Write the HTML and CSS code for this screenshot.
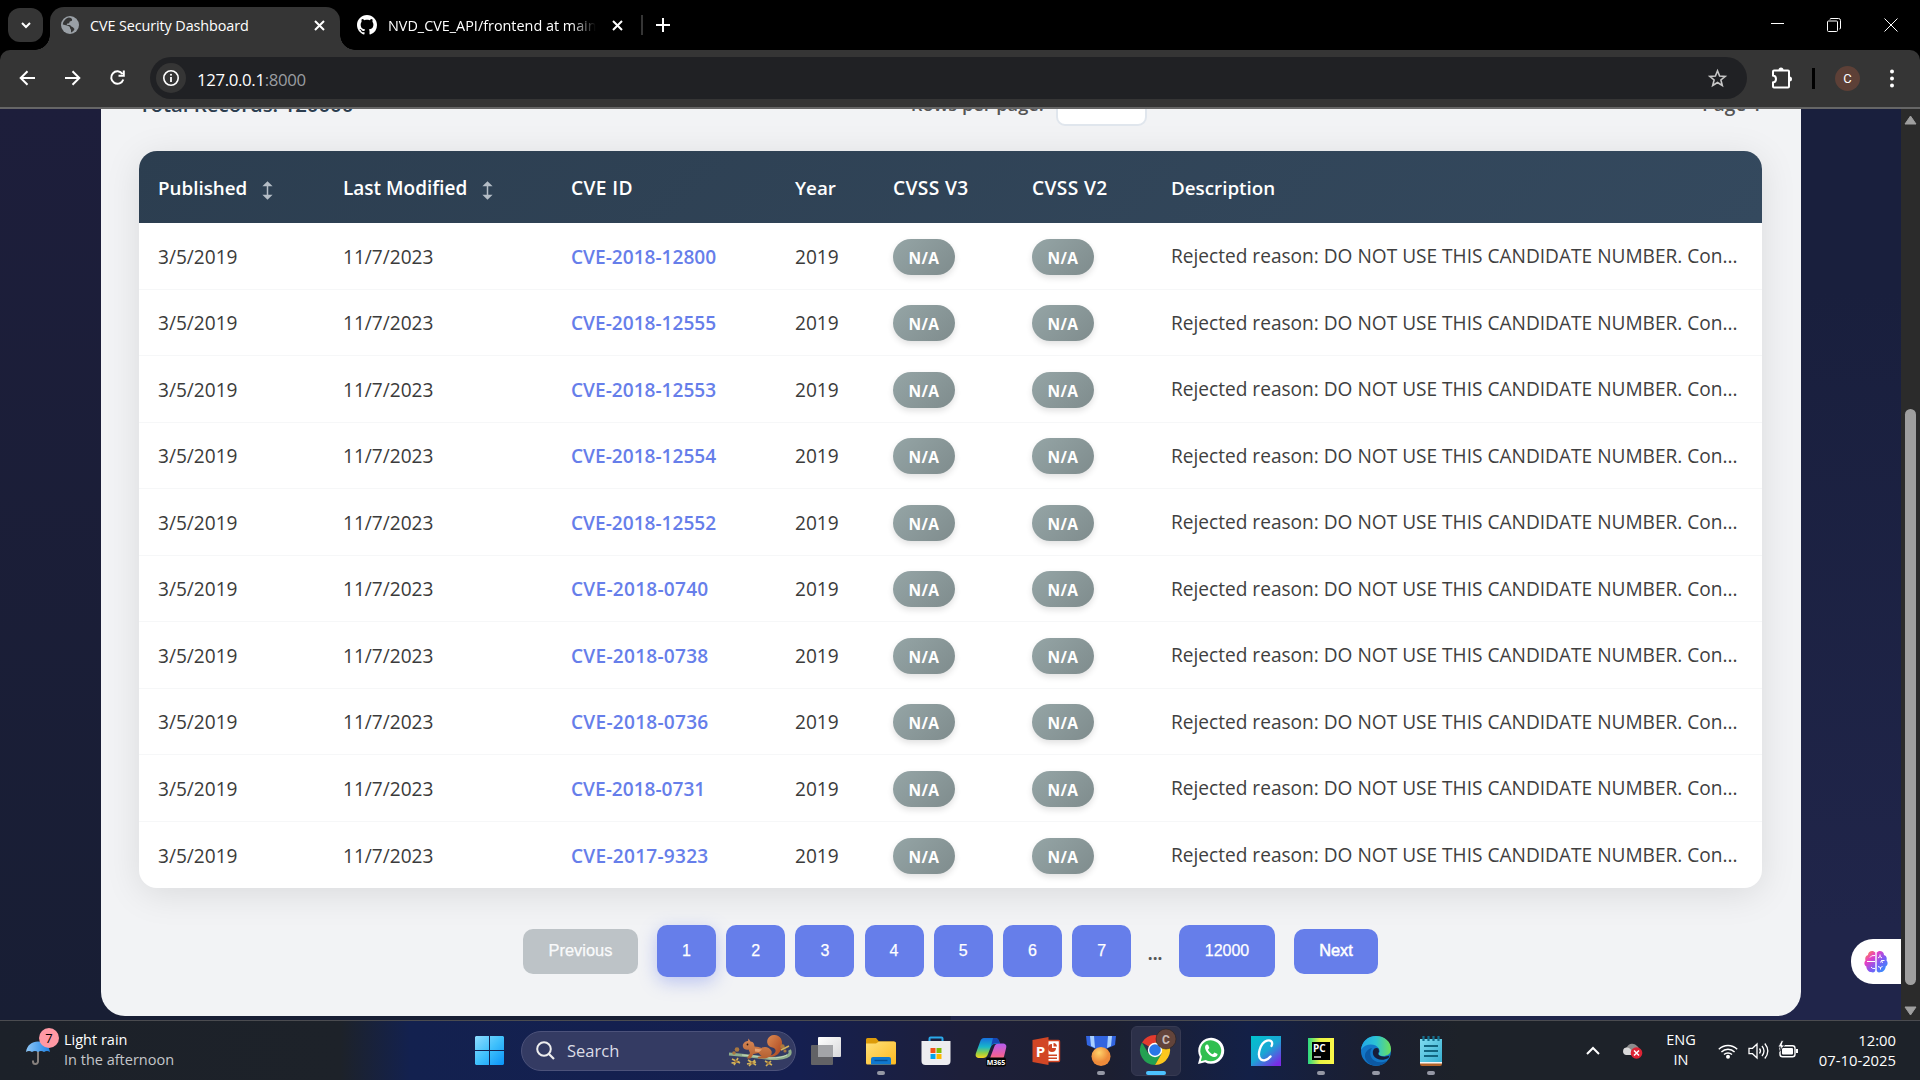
FILE: index.html
```html
<!DOCTYPE html>
<html lang="en">
<head>
<meta charset="utf-8">
<title>CVE Security Dashboard</title>
<link rel="stylesheet" href="styles.css">
</head>
<body>
<div class="screen">
  <header class="tabstrip">
    <div class="tab-search"><svg width="12" height="12" viewBox="0 0 12 12"><path d="M2 4l4 4 4-4" class="ln2"/></svg></div>
    <div class="tab active">
      <svg class="fav" width="18" height="18" viewBox="0 0 18 18"><circle cx="9" cy="9" r="9" fill="#9aa0a6"/><path d="M8 1.5C5 2 2 5 1.8 8.500L6 9.500c2 .5 3 1 3 2.500 0 1 1 1 1 2v2.500c2-.8 3-2 3.500-3.500-1-1-1.500-2-3-2.500-1-.3-.5-1.500-2-1.500H6.500c-1 0-1-1.500 0-1.500s2-.5 2-1.500 2-.5 2.500-1.500-.5-2-1-2.500z" fill="#353535"/></svg>
      <span class="tab-title t1">CVE Security Dashboard</span>
      <svg class="close" width="11" height="11" viewBox="0 0 11 11"><path d="M1 1l9 9M10 1l-9 9" class="ln2"/></svg>
    </div>
    <div class="tab">
      <svg class="fav" width="20" height="20" viewBox="0 0 16 16"><path fill="#fff" d="M8 0C3.580 0 0 3.580 0 8c0 3.540 2.290 6.530 5.470 7.590.4.070.55-.17.55-.38 0-.19-.01-.82-.01-1.490-2.010.37-2.530-.49-2.690-.94-.09-.23-.48-.94-.82-1.130-.28-.15-.68-.52-.01-.53.63-.01 1.080.58 1.230.82.72 1.210 1.870.87 2.330.66.070-.52.28-.87.51-1.070-1.780-.2-3.640-.89-3.640-3.950 0-.87.31-1.590.82-2.150-.08-.2-.36-1.020.08-2.120 0 0 .67-.21 2.200.82.640-.18 1.320-.27 2-.27s1.360.09 2 .27c1.530-1.040 2.200-.82 2.200-.82.44 1.100.16 1.920.08 2.120.51.56.82 1.270.82 2.150 0 3.070-1.870 3.750-3.650 3.950.29.25.54.73.54 1.480 0 1.070-.01 1.930-.01 2.200 0 .21.15.46.55.38A8.010 8.010 0 0 0 16 8c0-4.420-3.580-8-8-8z"/></svg>
      <span class="tab-title t2">NVD_CVE_API/frontend at main</span>
      <svg class="close" width="11" height="11" viewBox="0 0 11 11"><path d="M1 1l9 9M10 1l-9 9" class="ln2"/></svg>
    </div>
    <i class="tab-sep"></i>
    <svg class="plus" width="14" height="14" viewBox="0 0 14 14"><path d="M7 0v14M0 7h14" class="ln2"/></svg>
    <div class="win">
      <svg width="14" height="14" viewBox="0 0 14 14"><path d="M1 5.500h13" class="ln1"/></svg>
      <svg width="14" height="14" viewBox="0 0 14 14"><rect x=".5" y="3" width="10" height="10.500" rx="1" class="ln1"/><path d="M3 1.500Q3 .5 4 .5h7.500q2 0 2 2V10q0 1-1 1" class="ln1"/></svg>
      <svg width="14" height="14" viewBox="0 0 14 14"><path d="M.5.500l13 13M13.500.500l-13 13" class="ln1"/></svg>
    </div>
  </header>
  <div class="toolbar">
    <svg class="nav" width="16" height="16" viewBox="0 0 16 16"><path d="M15 8H1M7.500 1.200L.7 8l6.800 6.800" class="ln2"/></svg>
    <svg class="nav" width="16" height="16" viewBox="0 0 16 16"><path d="M0 8h14M7.500 1.200L14.300 8l-6.800 6.800" class="ln2"/></svg>
    <svg class="nav" width="16" height="16" viewBox="0 0 16 16"><path d="M12.500 4A6.200 6.200 0 1 0 13.300 9.500M13.800.5v5.300H8.500" class="ln2"/></svg>
    <div class="omnibox">
      <span class="info"><svg width="16" height="16" viewBox="0 0 16 16"><circle cx="8" cy="8" r="7.200" fill="none" stroke="#fff" stroke-width="1.600"/><path d="M8 7v5" stroke="#fff" stroke-width="1.800"/><circle cx="8" cy="4.700" r="1" fill="#fff"/></svg></span>
      <span class="url">127.0.0.1<span>:8000</span></span>
      <svg class="star" width="19" height="19" viewBox="0 0 19 19"><path d="M9.500 1.800l2.100 5.200 5.600.4-4.300 3.600 1.400 5.500-4.800-3-4.800 3 1.400-5.500L1.800 7.400l5.600-.4z" fill="none" stroke="#c7c7c7" stroke-width="1.600"/></svg>
    </div>
    <svg class="ext" width="22" height="22" viewBox="0 0 22 22"><path d="M2 4.500q0-1 1-1h14q1 0 1 1V19.500q0 1-1 1H3q-1 0-1-1V15.500c4-.5 4-6.500 0-7z" fill="none" stroke="#fff" stroke-width="2"/><path d="M7.500 3a2.500 2.500 0 0 1 5 0zM18.500 9.500a2.500 2.500 0 0 1 0 5z" fill="#fff"/></svg>
    <i class="tb-sep"></i>
    <span class="avatar">C</span>
    <svg class="dots" width="4" height="19" viewBox="0 0 4 19"><circle cx="2" cy="2.500" r="2" fill="#fff"/><circle cx="2" cy="9.500" r="2" fill="#fff"/><circle cx="2" cy="16.500" r="2" fill="#fff"/></svg>
  </div>

  <div class="viewport">
    <main class="page">
      <section class="card">
        <div class="controls">
          <span class="total">Total Records: 120000</span>
          <label class="per-page"><span>Rows per page:</span><span class="select"></span></label>
          <span class="page-no">Page 1</span>
        </div>
        <div class="table-wrap">
        <table>
          <colgroup><col class="c1"><col class="c2"><col class="c3"><col class="c4"><col class="c5"><col class="c5"><col></colgroup>
          <thead><tr>
            <th>Published<svg class="sort" width="9" height="19" viewBox="0 0 9 19"><path d="M4.500 1v17M1.200 4.500L4.500 1.200 7.800 4.500zM1.200 14.500L4.500 17.800 7.800 14.500z"/></svg></th>
            <th class="mod">Last Modified<svg class="sort" width="9" height="19" viewBox="0 0 9 19"><path d="M4.500 1v17M1.200 4.500L4.500 1.200 7.800 4.500zM1.200 14.500L4.500 17.800 7.800 14.500z"/></svg></th>
            <th class="caps">CVE ID</th><th>Year</th><th class="caps">CVSS V3</th><th class="caps">CVSS V2</th><th>Description</th>
          </tr></thead>
          <tbody>
            <tr><td>3/5/2019</td><td>11/7/2023</td><td class="id">CVE-2018-12800</td><td>2019</td><td><span class="badge">N/A</span></td><td><span class="badge">N/A</span></td><td class="desc">Rejected reason: DO NOT USE THIS CANDIDATE NUMBER. Con...</td></tr>
            <tr><td>3/5/2019</td><td>11/7/2023</td><td class="id">CVE-2018-12555</td><td>2019</td><td><span class="badge">N/A</span></td><td><span class="badge">N/A</span></td><td class="desc">Rejected reason: DO NOT USE THIS CANDIDATE NUMBER. Con...</td></tr>
            <tr><td>3/5/2019</td><td>11/7/2023</td><td class="id">CVE-2018-12553</td><td>2019</td><td><span class="badge">N/A</span></td><td><span class="badge">N/A</span></td><td class="desc">Rejected reason: DO NOT USE THIS CANDIDATE NUMBER. Con...</td></tr>
            <tr><td>3/5/2019</td><td>11/7/2023</td><td class="id">CVE-2018-12554</td><td>2019</td><td><span class="badge">N/A</span></td><td><span class="badge">N/A</span></td><td class="desc">Rejected reason: DO NOT USE THIS CANDIDATE NUMBER. Con...</td></tr>
            <tr><td>3/5/2019</td><td>11/7/2023</td><td class="id">CVE-2018-12552</td><td>2019</td><td><span class="badge">N/A</span></td><td><span class="badge">N/A</span></td><td class="desc">Rejected reason: DO NOT USE THIS CANDIDATE NUMBER. Con...</td></tr>
            <tr><td>3/5/2019</td><td>11/7/2023</td><td class="id short">CVE-2018-0740</td><td>2019</td><td><span class="badge">N/A</span></td><td><span class="badge">N/A</span></td><td class="desc">Rejected reason: DO NOT USE THIS CANDIDATE NUMBER. Con...</td></tr>
            <tr><td>3/5/2019</td><td>11/7/2023</td><td class="id short">CVE-2018-0738</td><td>2019</td><td><span class="badge">N/A</span></td><td><span class="badge">N/A</span></td><td class="desc">Rejected reason: DO NOT USE THIS CANDIDATE NUMBER. Con...</td></tr>
            <tr><td>3/5/2019</td><td>11/7/2023</td><td class="id short">CVE-2018-0736</td><td>2019</td><td><span class="badge">N/A</span></td><td><span class="badge">N/A</span></td><td class="desc">Rejected reason: DO NOT USE THIS CANDIDATE NUMBER. Con...</td></tr>
            <tr><td>3/5/2019</td><td>11/7/2023</td><td class="id">CVE-2018-0731</td><td>2019</td><td><span class="badge">N/A</span></td><td><span class="badge">N/A</span></td><td class="desc">Rejected reason: DO NOT USE THIS CANDIDATE NUMBER. Con...</td></tr>
            <tr><td>3/5/2019</td><td>11/7/2023</td><td class="id short">CVE-2017-9323</td><td>2019</td><td><span class="badge">N/A</span></td><td><span class="badge">N/A</span></td><td class="desc">Rejected reason: DO NOT USE THIS CANDIDATE NUMBER. Con...</td></tr>
          </tbody>
        </table>
        </div>
        <nav class="pager">
          <button class="prev" disabled>Previous</button>
          <div class="pages">
            <button class="current">1</button><button>2</button><button>3</button><button>4</button><button>5</button><button>6</button><button>7</button>
            <span class="gap">...</span>
            <button class="last">12000</button>
          </div>
          <button class="next">Next</button>
        </nav>
      </section>
      <div class="brain"><svg width="24" height="24" viewBox="0 0 24 24"><defs><linearGradient id="br" x1="0" y1="0" x2="1" y2="1"><stop offset="0" stop-color="#ff9d2e"/><stop offset=".3" stop-color="#e83fc4"/><stop offset=".6" stop-color="#7b5cf5"/><stop offset="1" stop-color="#1fa0ff"/></linearGradient></defs><path d="M11.300 2.500C9-.5 4 1 4 5 1 6 1 9 1.500 10.500c-2 2-1 5 .8 6C2.500 20 5 22 7 22c2.500 1 4.300 0 4.300-2zM12.700 2.500C15-.5 20 1 20 5c3 1 3 4 2.500 5.500 2 2 1 5-.8 6C21.500 20 19 22 17 22c-2.500 1-4.300 0-4.300-2z" fill="url(#br)"/><path d="M3 11.500h8M6 7.500Q7 5 11 5.500M7 17q1 2 4 1.500M14 8l2-1.500v-2M16 6.500l2 1.500M20.500 10.500h-3l-1 2M17.500 10.500l1 2.500M14 16.500l2.500 1 2-1M16.500 17.500v2" fill="none" stroke="#fff" stroke-width="1"/></svg></div>
    </main>
    <div class="scrollbar">
      <svg width="13" height="10" viewBox="0 0 13 10"><path d="M6.500 1L12 9H1z" fill="#9f9f9f" stroke="#9f9f9f" stroke-linejoin="round"/></svg>
      <i class="thumb"></i>
      <svg width="13" height="10" viewBox="0 0 13 10"><path d="M6.500 9L12 1H1z" fill="#9f9f9f" stroke="#9f9f9f" stroke-linejoin="round"/></svg>
    </div>
  </div>

  <footer class="taskbar">
    <div class="weather">
      <div class="umb"><svg width="26" height="26" viewBox="0 0 26 26"><defs><linearGradient id="um"><stop offset="0" stop-color="#8fc7f7"/><stop offset="1" stop-color="#1d83e6"/></linearGradient></defs><path d="M13 10v12.500a2.500 2.500 0 0 1-5 0v-1" fill="none" stroke="#86807d" stroke-width="2"/><path d="M1 13C2 6 7 2.500 13 2.500S24 6 25 13q-3-2-6 0-3-2-6 0-3-2-6 0-3-2-6 0z" fill="url(#um)"/></svg><b>7</b></div>
      <div class="wtext"><span>Light rain</span><span class="dim">In the afternoon</span></div>
    </div>
    <div class="apps">
      <svg class="start" width="29" height="29" viewBox="0 0 29 29"><defs><linearGradient id="wn" x1="0" y1="0" x2="1" y2="1" ><stop offset="0" stop-color="#8fdcff"/><stop offset=".5" stop-color="#3fc0fb"/><stop offset="1" stop-color="#0a93f8"/></linearGradient></defs><path d="M1 0h13v14H0V1zM15 0h13l1 1v13H15zM0 15h14v14H1l-1-1zM15 15h14v13l-1 1H15z" fill="url(#wn)"/></svg>
      <div class="search">
        <svg width="19" height="19" viewBox="0 0 19 19"><circle cx="8" cy="8" r="6.800" fill="none" stroke="#eee" stroke-width="2"/><path d="M13 13l5 5" stroke="#eee" stroke-width="2.200"/></svg>
        <span>Search</span>
        <svg class="squirrel" width="64" height="34" viewBox="0 0 64 34"><defs><linearGradient id="tail" x1="0" y1="0" x2="1" y2="1"><stop offset="0" stop-color="#dd8b52"/><stop offset="1" stop-color="#a8421d"/></linearGradient><linearGradient id="fur" x1="0" y1="0" x2="0" y2="1"><stop offset="0" stop-color="#d98a58"/><stop offset="1" stop-color="#b35f30"/></linearGradient></defs>
          <path d="M1 20Q24 22 42 24.500q15 0 19-3.500 2-2 .5-5" fill="none" stroke="#8fae8b" stroke-width="3"/><path d="M14 21q14 1 28 3 12 0 17-3" fill="none" stroke="#c5d6bd" stroke-width="1"/>
          <path d="M40 22c6-1 9-4 7-7-1-2-4-1-6-3-4-4-1-11 5-11 6-.3 9 5 8 11-1 7-6 11-12 11z" fill="url(#tail)"/>
          <path d="M15 13c-1-3 2-6 5-6l.5-2.500 2 3c3 0 4 3 4 5 3 0 5 1 7 1.500 3-2 8-1 10 3 1 4-2 7-7 7.500h-6l-1-1.500 4-1-3-3-5 1-3 4.500h-3.500l3-5.500-1.500-3.500c-2 .5-5 0-5.500-2.500z" fill="url(#fur)"/><path d="M27 14.500l7 1-3 2.500-4-.5z" fill="#e6a272"/><circle cx="19.500" cy="10.500" r=".9" fill="#2a1a12"/>
          <g fill="#a97740"><circle cx="9" cy="15.500" r="2.300"/><circle cx="6" cy="19" r="1.800"/><circle cx="54.500" cy="12.500" r="2.200"/><circle cx="57" cy="17" r="1.600"/></g><g stroke="#d2b25b" stroke-width="1.600"><path d="M4 25l8 4M10 24l-4 7M3.500 29l8-1.500M20 26l8 5M27 26l-6 6M19 30l9-2M37 27l7 4M43 27l-5 5M53 16l8-4"/></g><g fill="#9a7138"><circle cx="8" cy="27.500" r="1.500"/><circle cx="24" cy="29" r="1.500"/><circle cx="40" cy="29" r="1.500"/></g></svg>
      </div>
      <div class="app"><svg width="30" height="30" viewBox="0 0 30 30"><defs><linearGradient id="tv" x1="0" y1="0" x2="1" y2="1"><stop offset="0" stop-color="#fff"/><stop offset="1" stop-color="#d8d8da"/></linearGradient></defs><rect y="9" width="22" height="20" rx="1" fill="#626266"/><rect x="7" y="1" width="23" height="20" rx="1" fill="url(#tv)"/><path d="M7 9h15v12H7z" fill="#a3a4a8"/></svg></div>
      <div class="app run"><svg width="30" height="30" viewBox="0 0 30 30"><defs><linearGradient id="fo" x1="0" y1="0" x2="1" y2="1"><stop offset="0" stop-color="#ffe07a"/><stop offset="1" stop-color="#fdba20"/></linearGradient></defs><path d="M0 10V3.500Q0 2 1.500 2H10l3 3.500h15V12z" fill="#dd9b0a"/><path d="M0 7.500h10l3-2h15.500Q30 5.500 30 7V27q0 1.500-1.500 1.500h-27Q0 28.500 0 27z" fill="url(#fo)"/><path d="M5 28.500V23q0-2 2-2h16q2 0 2 2v5.500z" fill="#0f78cf"/><path d="M8.500 24.500h13" stroke="#064f94" stroke-width="1.400"/></svg></div>
      <div class="app"><svg width="30" height="30" viewBox="0 0 30 30"><path d="M8.500 7V2.500Q8.500 1.500 9.500 1.500h11q1 0 1 1V7" fill="none" stroke="#2aa9ea" stroke-width="2"/><path d="M.5 5h29v20q0 4-4 4h-21q-4 0-4-4z" fill="#ededf0"/><path d="M9.500 12h5v5h-5z" fill="#f1511b"/><path d="M15.500 12h5v5h-5z" fill="#80bc06"/><path d="M9.500 18h5v5h-5z" fill="#00a4ef"/><path d="M15.500 18h5v5h-5z" fill="#fbb800"/></svg></div>
      <div class="app"><svg width="30" height="30" viewBox="0 0 30 30"><defs><linearGradient id="ma" x1="0" y1="0" x2="0" y2="1"><stop offset="0" stop-color="#176fe0"/><stop offset=".45" stop-color="#19b7c9"/><stop offset=".75" stop-color="#91cf45"/><stop offset="1" stop-color="#f8d21f"/></linearGradient><linearGradient id="mb" x1="0" y1="0" x2="0" y2="1"><stop offset="0" stop-color="#b45df0"/><stop offset=".6" stop-color="#ef5f9c"/><stop offset="1" stop-color="#ff8a4c"/></linearGradient></defs><path d="M8 2h11c3 0 4 2 5 6h-5c-3 0-4 2-5 5l-2 5c-1 3-3 4-5 4H4c-4 0-5-2-4-5L4 6c1-3 2-4 4-4z" fill="url(#ma)"/><path d="M23 7.500h3c4 0 5 2 4 5l-2 8c-1 4-3 6-6 6H10c3-1 4-4 5-7l3-8c1-3 2-4 5-4z" fill="url(#mb)"/><path d="M17 2h2c3 0 4 2 5 5.500h-5c-2 0-3 1-4 3z" fill="#1546b5"/><rect x="10" y="21.500" width="20" height="9" rx="2" fill="#050505"/><text x="20" y="28.800" class="m365">M365</text></svg></div>
      <div class="app"><svg width="28" height="28" viewBox="0 0 28 28"><rect x="13" y="3.500" width="14.500" height="21" rx="1" fill="#fff" stroke="#d04423" stroke-width="1.400"/><path d="M20 7a4 4 0 1 0 4 4h-4zM21.500 6v3.500H25A4 4 0 0 0 21.500 6zM16 17.500h9v1.500h-9zM16 20.500h9V22h-9z" fill="#d04423"/><path d="M.5 3l16-3v28l-16-3z" fill="#d24625"/><text x="8.500" y="19.500" class="ppt">P</text></svg></div>
      <div class="app run"><svg width="30" height="30" viewBox="0 0 30 30"><defs><radialGradient id="md" cx=".4" cy=".3"><stop offset="0" stop-color="#ffd36b"/><stop offset="1" stop-color="#ee8b3a"/></radialGradient></defs><path d="M0 0h30l-1 9-9 4H10L1 9z" fill="#3265e0"/><path d="M4 0h4l1 12-4-2zM26 0h-4l-1 12 4-2z" fill="#a8d0ff"/><circle cx="15" cy="20.500" r="9.500" fill="url(#md)"/></svg></div>
      <div class="app focus"><svg width="38" height="36" viewBox="0 0 38 36"><path d="M16 21L3 13.500A15 15 0 0 1 29 13.500H16z" fill="#e33b2e"/><path d="M3 13.500A15 15 0 0 0 16 36l6.500-11.200H9.500z" fill="#23a152"/><path d="M16 36A15 15 0 0 0 29 13.500H16l6.500 11.300z" fill="#fcc71d"/><circle cx="16" cy="21" r="7.200" fill="#fff"/><circle cx="16" cy="21" r="5.800" fill="#2a76e8"/><circle cx="27" cy="10" r="10" fill="#63443b" stroke="#2a211f" stroke-width=".6"/><text x="27" y="14.500" class="cprof">C</text></svg></div>
      <div class="app"><svg width="28" height="28" viewBox="0 0 28 28"><path d="M1 27l1.800-7A13 13 0 1 1 8 25.200z" fill="#fff"/><path d="M3.800 24.200l1.200-4.600A10.500 10.500 0 1 1 8.700 23z" fill="#31bf50"/><path d="M9.700 7.500c-1.200.5-2 2-1.500 4 1 4 5 8 8.800 8.600 2 .2 3.500-1 3.600-3l-3.200-1.600-1.500 1.800c-2-.6-4-2.500-4.900-4.600l1.400-1.600-1.300-3.300z" fill="#fff"/></svg></div>
      <div class="app"><svg width="30" height="30" viewBox="0 0 30 30"><defs><linearGradient id="ca" x1="0" y1="0" x2=".8" y2="1"><stop offset="0" stop-color="#01c3cc"/><stop offset=".55" stop-color="#1aa6d4"/><stop offset="1" stop-color="#7a2be6"/></linearGradient></defs><path d="M0 0h30v30H0z" fill="url(#ca)"/><path d="M20.500 10c2-4-1-6.500-4.500-5.300C9 7 5.500 20 10 23.500c3 2 7 0 9.500-3" fill="none" stroke="#fff" stroke-width="2.300" stroke-linecap="round"/></svg></div>
      <div class="app run"><svg width="28" height="28" viewBox="0 0 28 28"><defs><linearGradient id="pc"><stop offset="0" stop-color="#27d884"/><stop offset=".45" stop-color="#e9f542"/><stop offset="1" stop-color="#fcf84a"/></linearGradient></defs><path d="M1 1h26v26H1z" fill="url(#pc)"/><path d="M5 5h18v18H5z" fill="#000"/><text x="6" y="14.500" class="pct">PC</text><path d="M7 20h7" stroke="#fff" stroke-width="1.300"/></svg></div>
      <div class="app run"><svg width="30" height="30" viewBox="0 0 30 30"><defs><linearGradient id="ea"><stop offset="0" stop-color="#22a7e8"/><stop offset=".5" stop-color="#2cc3d4"/><stop offset="1" stop-color="#6de05a"/></linearGradient></defs><circle cx="15" cy="15" r="15" fill="#1277c8"/><path d="M0 14C1 5 7 0 15 0c9 0 15 6 15 13 0 5-4 7-8 7-3 0-5-1-4-3 1-1 1-2 0-4C15 7 4 7 0 14z" fill="url(#ea)"/><path d="M11 12c-5 7 1 18 15 13-6 7-17 6-21-1-3-6 1-11 6-12z" fill="#0c59a4"/><path d="M17.500 12.500c-4-2-7 2-5 7 2 4 9 6 15 2.500l1-2.500c-3 1.500-8 1.500-10 0-2-1.500-1-2.500-.5-4z" fill="#171d3a"/></svg></div>
      <div class="app run"><svg width="24" height="30" viewBox="0 0 24 30"><defs><linearGradient id="np" x1="0" y1="0" x2="1" y2="1"><stop offset="0" stop-color="#7fdcf0"/><stop offset="1" stop-color="#36aed0"/></linearGradient></defs><path d="M1 24h22v4q0 2-2 2H3q-2 0-2-2z" fill="#b4642a"/><path d="M1 3h22v24H1z" fill="url(#np)"/><path d="M1 26h22v1.500H1z" fill="#f4f4f4"/><path d="M5 10h14M5 15h14M5 20h14" stroke="#11657f" stroke-width="1.800"/><path d="M4.500 0v5M9.500 0v5M14.500 0v5M19.500 0v5" stroke="#14718f" stroke-width="2.200"/></svg></div>
    </div>
    <div class="tray">
      <svg class="chev" width="14" height="9" viewBox="0 0 14 9"><path d="M1 8l6-6 6 6" class="ln2"/></svg>
      <svg class="cloud" width="21" height="17" viewBox="0 0 21 17"><path d="M5 13a4.500 4.500 0 0 1 0-8A6 6 0 0 1 15 4c3 1 2 8 0 9z" fill="#8d8d8d"/><path d="M4 13a3.800 3.800 0 0 1 1-7.500c3 0 5 3 6 7.500z" fill="#d9d9d9"/><circle cx="14.500" cy="11" r="5.800" fill="#dd2434"/><path d="M12 8.500l5 5M17 8.500l-5 5" stroke="#fff" stroke-width="1.500"/></svg>
      <div class="lang"><span>ENG</span><span>IN</span></div>
      <svg class="wifi" width="20" height="16" viewBox="0 0 20 16"><path d="M.8 6.300a13 13 0 0 1 18.400 0M3.400 9a9.300 9.300 0 0 1 13.200 0M6 11.600a5.700 5.700 0 0 1 8 0" fill="none" stroke="#fff" stroke-width="1.400"/><circle cx="10" cy="13.800" r="2" fill="#fff"/></svg>
      <svg class="vol" width="21" height="18" viewBox="0 0 21 18"><path d="M1 6.300h3.500L9 2v14l-4.500-4.300H1zM11.500 6.500q2 2.500 0 5M14 4q4 5 0 10M16.800 1.500q6 7.500 0 15" fill="none" stroke="#fff" stroke-width="1.300"/></svg>
      <svg class="bat" width="21" height="17" viewBox="0 0 21 17"><rect x="2" y="3.700" width="15" height="11" rx="2.500" fill="none" stroke="#fff" stroke-width="1.400"/><rect x="4" y="6" width="11" height="6.500" rx="1" fill="#fff"/><path d="M18 7h2v4h-2z" fill="#fff"/><path d="M3.500-1.500L0 5h3L1.500 9.500 6.500 3H4l1.500-4.500z" fill="#fff" stroke="#1d222b" stroke-width=".8"/></svg>
      <div class="clock"><span>12:00</span><span>07-10-2025</span></div>
    </div>
  </footer>
</div>
</body>
</html>
```
FILE: styles.css
```css
* { box-sizing: border-box; }
body { margin: 0; background: #000; font-family: "Open Sans", "Noto Sans", sans-serif; }
svg { display: block; flex: none; overflow: visible; }
.screen { width: 1920px; height: 1080px; display: flex; flex-direction: column; overflow: hidden; }
.ln1 { fill: none; stroke: #fff; stroke-width: 1; }
.ln2 { fill: none; stroke: #fff; stroke-width: 2; }

/* tab strip */
.tabstrip { height: 50px; flex: none; display: flex; align-items: center; padding-left: 8px; background: #000; color: #fff; font-size: 14.4px; }
.tab-search { width: 35px; height: 34px; border-radius: 12px; background: #353535; display: grid; place-items: center; }
.tab { height: 43px; margin-top: 7px; display: flex; align-items: center; padding: 0 0 7px 17px; }
.tab.active { position: relative; width: 290px; margin-left: 7px; padding-left: 11px; background: #353535; border-radius: 14px 14px 0 0; }
.tab.active::before, .tab.active::after { content: ""; position: absolute; bottom: 0; width: 15px; height: 15px; }
.tab.active::before { right: 100%; background: radial-gradient(circle at 0 0, transparent 14.5px, #353535 15px); }
.tab.active::after { left: 100%; background: radial-gradient(circle at 100% 0, transparent 14.5px, #353535 15px); }
.tab-title { white-space: nowrap; overflow: hidden; margin-left: 11px; line-height: 22px; padding-top: 1px; letter-spacing: -0.1px; }
.t1 { width: 224px; }
.t2 { width: 208px; margin-right: 16px; letter-spacing: 0; -webkit-mask-image: linear-gradient(90deg, #000 88%, transparent); mask-image: linear-gradient(90deg, #000 88%, transparent); }
.tab-sep { width: 2px; height: 20px; margin-left: 18px; background: #353535; }
.plus { margin-left: 13px; }
.win { margin-left: auto; display: flex; gap: 43px; margin-right: 22px; align-items: center; }

/* toolbar */
.toolbar { height: 59px; flex: none; display: flex; align-items: center; padding: 0 26px 1px 20px; background: #353535; border-bottom: 2px solid #666; border-radius: 10px 10px 0 0; }
.nav { margin-right: 29px; }
.nav + .nav + .nav { margin-right: 24px; }
.omnibox { width: 1597px; height: 42px; border-radius: 21px; background: #202124; display: flex; align-items: center; padding: 0 20px 0 6px; }
.info { width: 30px; height: 30px; border-radius: 50%; background: #353535; display: grid; place-items: center; }
.url { margin-left: 11px; padding-top: 2px; font-size: 16.8px; color: #fff; letter-spacing: -0.35px; }
.url span { color: #9a9da1; }
.star { margin-left: auto; }
.ext { margin-left: 24px; }
.tb-sep { width: 3px; height: 21px; margin-left: 19px; background: #000; }
.avatar { width: 25px; height: 25px; margin-left: 20px; border-radius: 50%; background: #5d4037; color: #fff; font: 13px/25px Roboto, sans-serif; text-align: center; }
.dots { margin-left: auto; }

/* page */
.viewport { height: 911px; flex: none; display: flex; overflow: hidden; }
.page { position: relative; flex: 1; padding: 0 100px 0 101px; background: linear-gradient(180deg, rgba(33,36,72,0) 20%, #20254a 90%) right / 50% 100% no-repeat, linear-gradient(90deg, transparent 50%, #191f3d 50%), linear-gradient(180deg, #1d1e3b, #181e34); }
.card { height: 907px; padding: 0 39px 0 38px; background: #f2f3f5; border-radius: 0 0 24px 24px; color: #333; font-size: 19.1px; }
.controls { height: 44px; margin-top: -27px; margin-bottom: 25px; display: flex; align-items: center; justify-content: space-between; font-weight: 600; line-height: 26px; }
.card::before { content: ""; display: table; }
.total { color: #2c3e50; font-size: 20.4px; }
.per-page { display: flex; align-items: center; gap: 12px; color: #555; font-size: 18.2px; margin-left: 2px; }
.select { width: 91px; height: 44px; border: 2px solid #e0e6ed; border-radius: 9px; background: #fff; }
.page-no { text-align: right; color: #555; font-size: 19px; }
.table-wrap { height: 737px; border-radius: 18px; overflow: hidden; background: #fff; box-shadow: 0 6px 36px rgba(0,0,0,.1); }
table { width: 100%; table-layout: fixed; border-collapse: separate; border-spacing: 0; }
.c1 { width: 185px; } .c2 { width: 228px; } .c3 { width: 224px; } .c4 { width: 98px; } .c5 { width: 139px; }
thead { background: linear-gradient(135deg, #2c3e50, #34495e); }
th { height: 72px; padding: 1px 0 0 19px; text-align: left; color: #fff; font-weight: 600; font-size: 18.8px; white-space: nowrap; }
.mod { font-size: 19px; }
.caps { font-size: 19.2px; letter-spacing: .35px; }
.sort { display: inline-block; vertical-align: -5px; margin-left: 16px; fill: #b4bdc6; stroke: #b4bdc6; stroke-width: 1.5; }
td { height: 66.5px; padding: 2px 0 0 19px; border-bottom: 1px solid #f6f7f8; white-space: nowrap; color: #3b3b3b; }
tr:last-child td { border-bottom: 0; }
td.id { color: #667eea; font-weight: 600; }
.short { letter-spacing: .25px; }
td.desc { padding-bottom: 1px; color: #404040; }
.badge { display: block; width: 62px; height: 36px; padding-top: 1px; border-radius: 18px; background: linear-gradient(135deg, #95a5a6, #7f8c8d); box-shadow: 0 3px 6px rgba(0,0,0,.12); color: #fff; font-weight: 700; font-size: 15.5px; line-height: 37px; text-align: center; letter-spacing: .4px; }

/* pagination */
.pager { margin-top: 37px; padding-left: 384px; display: flex; align-items: center; gap: 19px; }
button { border: 0; padding: 0; border-radius: 10px; background: #667eea; color: #fff; font: 16px "Liberation Sans", Arial, sans-serif; -webkit-text-stroke: .25px #fff; }
.prev, .next { height: 45px; font-size: 16.4px; padding-bottom: 2px; }
.prev { width: 115px; background: #bdc3c7; color: #f8f9fa; }
.next { width: 84px; -webkit-text-stroke-width: .5px; }
.pages { display: flex; gap: 10.2px; }
.pages button { width: 59px; height: 52px; padding-bottom: 1px; }
.pages .last { width: 96px; }
.pages .current { box-shadow: 0 5px 18px rgba(102,126,234,.4); }
.gap { width: 27.5px; text-align: center; color: #555; line-height: 58px; height: 52px; font-size: 17px; font-weight: 700; }

.brain { position: absolute; right: 0; bottom: 36px; width: 50px; height: 45px; border-radius: 22px 0 0 22px; background: #fff; padding: 11px 0 0 13px; }
.scrollbar { width: 19px; background: #2b2b2b; display: flex; flex-direction: column; align-items: center; padding: 6px 0 4px; }
.thumb { width: 11px; height: 576px; margin: auto 0 21px; border-radius: 6px; background: #9f9f9f; }

/* taskbar */
.taskbar { height: 60px; flex: none; display: flex; align-items: center; border-top: 1px solid #4b4c50; color: #fff; font-size: 14.5px; background: linear-gradient(90deg, #1c2129 0, #1d2229 340px, #13214f 410px, #151f50 800px, #1d1f3a 960px, #1c1f31 1110px, #132047 1250px, #1b1f30 1370px, #1d2229 1460px); }
.weather { width: 475px; display: flex; align-items: center; padding-left: 25px; }
.umb { position: relative; width: 39px; padding-top: 10px; height: 44px; }
.umb b { position: absolute; left: 14px; top: -1px; width: 20px; height: 20px; border-radius: 50%; background: #ff99a4; color: #000; font: 13px/20px "Open Sans", sans-serif; text-align: center; }
.wtext, .lang, .clock { display: flex; flex-direction: column; line-height: 20px; padding-bottom: 1px; }
.dim { color: #c4c6c9; }
.apps { display: flex; align-items: center; }
.search { width: 275px; height: 40px; margin: 0 0 0 17px; border-radius: 20px; border: 1px solid #4c527a; background: #343b63; display: flex; align-items: center; padding: 0 3px 0 14px; font-size: 16.5px; color: #dcdde6; }
.search span { margin-left: 12px; }
.squirrel { margin-left: auto; }
.app { position: relative; width: 50px; height: 50px; margin-left: 5px; display: grid; place-items: center; border-radius: 6px; }
.focus { background: #2c3049; border: 1px solid #373a52; }
.focus svg { margin: -8px 0 0 4px; }
.run::after, .focus::after { content: ""; position: absolute; left: 21px; bottom: 1px; width: 8px; height: 4px; border-radius: 2px; background: #9598a5; }
.focus::after { left: 14px; bottom: 0; width: 20px; background: #4cc2ff; }
.m365 { font: 700 7px "Open Sans", sans-serif; fill: #fff; text-anchor: middle; }
.ppt { font: 700 15px "Open Sans", sans-serif; fill: #fff; text-anchor: middle; }
.cprof { font: 700 12px Roboto, sans-serif; fill: #c9bcb8; text-anchor: middle; }
.pct { font: 700 10px "Open Sans", sans-serif; fill: #fff; }
.tray { margin-left: auto; display: flex; align-items: center; padding-right: 24px; }
.cloud { margin-left: 22px; }
.lang { width: 40px; margin-left: 18px; text-align: center; }
.wifi { margin-left: 17px; }
.vol { margin-left: 10px; }
.bat { margin-left: 9px; }
.clock { width: 97px; text-align: right; white-space: nowrap; font-size: 14.8px; }
```
